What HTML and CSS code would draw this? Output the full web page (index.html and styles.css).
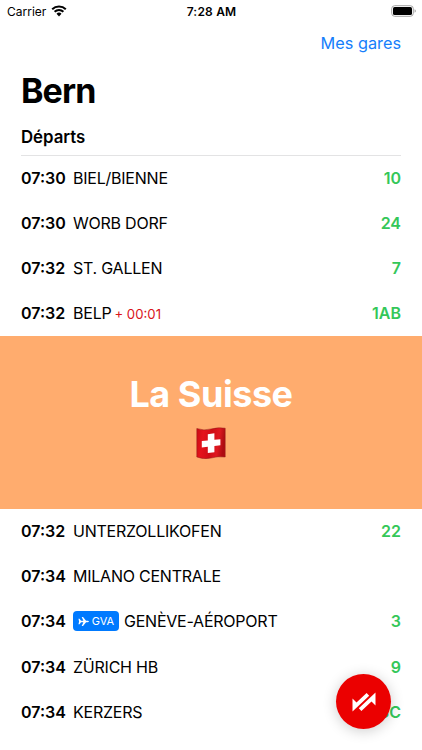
FILE: index.html
```html
<!DOCTYPE html>
<html lang="fr">
<head>
    <meta charset="UTF-8">
    <meta name="viewport" content="width=device-width, initial-scale=1.0">
    <title>Bern</title>
    <link rel="stylesheet" href="styles.css">
</head>
<body>
    <header class="status-bar">
        <div class="carrier">
            <span>Carrier</span>
            <svg class="wifi" viewBox="0 0 16 12" width="16" height="12">
                <path d="M1.2 4.200a9.700 9.700 0 0 1 13.600 0M3.600 6.700a6.300 6.300 0 0 1 8.800 0" fill="none" stroke="#000" stroke-width="2"/>
                <path d="M5.5 8.800a3.600 3.600 0 0 1 5 0L8 11.400z"/>
            </svg>
        </div>
        <span class="clock">7:28 AM</span>
        <svg class="battery" viewBox="0 0 25 12" width="25" height="12">
            <rect x="0.7" y="0.7" width="21.6" height="10.6" rx="3" fill="#fff" stroke="#a3a3a3"/>
            <rect x="2" y="2" width="19" height="8" rx="1.6"/>
            <path d="M23.6 4.2v3.6q1.2-.5 1.2-1.8t-1.2-1.8z" fill="#999"/>
        </svg>
    </header>

    <main>
        <nav class="nav"><a class="nav-link">Mes gares</a></nav>
        <h1>Bern</h1>
        <h2>Départs</h2>

        <ul class="departures">
            <li><b class="time">07:30</b><span class="name">BIEL/BIENNE</span><span class="track">10</span></li>
            <li><b class="time">07:30</b><span class="name">WORB DORF</span><span class="track">24</span></li>
            <li><b class="time">07:32</b><span class="name">ST. GALLEN</span><span class="track">7</span></li>
            <li><b class="time">07:32</b><span class="name">BELP</span><span class="delay">+ 00:01</span><span class="track">1AB</span></li>
        </ul>

        <section class="banner">
            <p class="banner-title">La Suisse</p>
            <svg class="flag" viewBox="0 0 30 32" width="30" height="32">
                <defs>
                    <linearGradient id="cloth" x1="0" x2="1" y1="0" y2="0.15">
                        <stop offset="0" stop-color="#c90d15"/>
                        <stop offset="0.25" stop-color="#e5121b"/>
                        <stop offset="0.55" stop-color="#cf0e16"/>
                        <stop offset="0.8" stop-color="#df1820"/>
                        <stop offset="1" stop-color="#ae0c12"/>
                    </linearGradient>
                </defs>
                <path d="M.8 1.500Q7.500 4 15 2T29.200 1.200V30Q22 29 15 31T.8 30z" fill="url(#cloth)" stroke="#8e1a18" stroke-width=".5"/>
                <path d="M11.800 7.200l6.600-.9v6.400l6-.5v6l-6 .8v6.200l-6.600.8v-6.200l-6 .6v-6.400l6-.5z" fill="#fff"/>
            </svg>
        </section>

        <ul class="departures">
            <li><b class="time">07:32</b><span class="name">UNTERZOLLIKOFEN</span><span class="track">22</span></li>
            <li><b class="time">07:34</b><span class="name">MILANO CENTRALE</span></li>
            <li>
                <b class="time">07:34</b>
                <span class="badge">
                    <svg viewBox="0 0 12 12" width="11" height="11"><path d="M.5 3h1.200l1.600 2.100h2.600L4 1h1.500l3.300 4.100h1.700q1.400.2 1.400.9t-1.400.9H8.800L5.500 11H4l1.900-4.100H3.300L1.700 9H.5l.7-3z" fill="#fff"/></svg>
                    GVA
                </span>
                <span class="name">GENÈVE-AÉROPORT</span>
                <span class="track">3</span>
            </li>
            <li><b class="time">07:34</b><span class="name">ZÜRICH HB</span><span class="track">9</span></li>
            <li><b class="time">07:34</b><span class="name">KERZERS</span><span class="track">3C</span></li>
        </ul>
    </main>

    <button class="fab" aria-label="Trajet">
        <svg viewBox="-12 -10 24 20" width="24" height="20">
            <path d="M-11.500-3.500V9.500L5.200-6.200 2.600-8.900-7.500.4zM11.500 3.500V-9.500L-5.200 6.200-2.600 8.900 7.500-.4z" fill="#fff"/>
        </svg>
    </button>
</body>
</html>
```

FILE: styles.css
```css
* {
    box-sizing: border-box;
}

body {
    margin: 0;
    height: 750px;
    overflow: hidden;
    background-color: #fff;
    color: #000;
    font-family: Inter, "Liberation Sans", sans-serif;
    font-size: 16px;
}

/* Status bar */
.status-bar {
    display: grid;
    grid-template-columns: 1fr auto 1fr;
    align-items: center;
    height: 22px;
    padding: 0 6px 0 7px;
    font-size: 12px;
}

.carrier {
    display: flex;
    align-items: center;
    gap: 5px;
}

.wifi {
    margin-top: -1px;
}

.clock {
    font-weight: 600;
    letter-spacing: 0.2px;
}

.battery {
    justify-self: end;
    margin-top: -1px;
}

/* Header */
.nav {
    display: flex;
    justify-content: flex-end;
    height: 44px;
    padding: 0 21px;
    line-height: 43px;
}

.nav-link {
    color: #157efb;
    font-size: 16.3px;
}

h1 {
    height: 58px;
    margin: 0;
    padding: 0 21px;
    font-size: 34px;
    line-height: 50px;
    letter-spacing: -0.9px;
}

h2 {
    height: 32px;
    margin: 0 21px;
    border-bottom: 1px solid #e3e3e4;
    font-size: 16.8px;
    font-weight: 600;
    line-height: 27px;
}

/* Departures */
.departures {
    margin: 0;
    padding: 0 21px;
    list-style: none;
}

.departures li {
    display: flex;
    align-items: center;
    height: 45.1px;
    padding-bottom: 1.4px;
    white-space: nowrap;
}

.time {
    width: 52px;
    font-weight: 600;
}

.name {
    letter-spacing: -0.23px;
}

.delay {
    margin-left: 3px;
    padding-top: 1px;
    color: #d9141b;
    font-size: 13.2px;
}

.track {
    margin-left: auto;
    color: #34c759;
    font-weight: 600;
}

.badge {
    display: flex;
    align-items: center;
    justify-content: center;
    gap: 3px;
    width: 46px;
    height: 20px;
    margin-right: 5px;
    border-radius: 4px;
    background-color: #007aff;
    color: #fff;
    font-size: 11px;
}

/* Banner */
.banner {
    display: flex;
    flex-direction: column;
    align-items: center;
    height: 173px;
    padding-top: 34px;
    background-color: #ffac6e;
}

.banner-title {
    margin: 0;
    color: #fff;
    font-size: 36px;
    font-weight: 700;
    line-height: 48px;
    letter-spacing: -0.45px;
}

.flag {
    margin-top: 9px;
}

/* Floating action button */
.fab {
    position: absolute;
    right: 31px;
    bottom: 21px;
    display: flex;
    align-items: center;
    justify-content: center;
    width: 55px;
    height: 55px;
    padding: 0;
    border: none;
    border-radius: 50%;
    background-color: #eb0000;
    box-shadow: 0 2px 14px rgba(0, 0, 0, 0.2);
}
```
